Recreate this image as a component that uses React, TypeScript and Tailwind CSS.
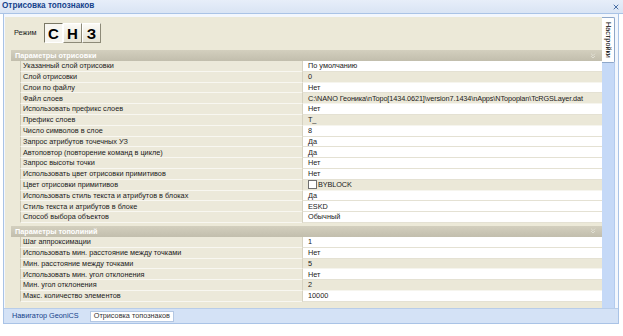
import React from 'react';
import { ChevronsDown, X } from 'lucide-react';

type PropRow = {
  label: string;
  value: string;
  readOnly?: boolean;
  swatch?: boolean;
};

const drawRows: PropRow[] = [
  { label: 'Указанный слой отрисовки', value: 'По умолчанию' },
  { label: 'Слой отрисовки', value: '0', readOnly: true },
  { label: 'Слои по файлу', value: 'Нет' },
  { label: 'Файл слоев', value: 'C:\\NANO Геоника\\nTopo[1434.0621]\\version7.1434\\nApps\\NTopoplan\\TcRGSLayer.dat', readOnly: true },
  { label: 'Использовать префикс слоев', value: 'Нет' },
  { label: 'Префикс слоев', value: 'T_', readOnly: true },
  { label: 'Число символов в слое', value: '8' },
  { label: 'Запрос атрибутов точечных УЗ', value: 'Да' },
  { label: 'Автоповтор (повторение команд в цикле)', value: 'Да' },
  { label: 'Запрос высоты точки', value: 'Нет' },
  { label: 'Использовать цвет отрисовки примитивов', value: 'Нет' },
  { label: 'Цвет отрисовки примитивов', value: 'BYBLOCK', readOnly: true, swatch: true },
  { label: 'Использовать стиль текста и атрибутов в блоках', value: 'Да' },
  { label: 'Стиль текста и атрибутов в блоке', value: 'ESKD' },
  { label: 'Способ выбора объектов', value: 'Обычный' },
];

const lineRows: PropRow[] = [
  { label: 'Шаг аппроксимации', value: '1' },
  { label: 'Использовать мин. расстояние между точками', value: 'Нет' },
  { label: 'Мин. расстояние между точками', value: '5', readOnly: true },
  { label: 'Использовать мин. угол отклонения', value: 'Нет' },
  { label: 'Мин. угол отклонения', value: '2', readOnly: true },
  { label: 'Макс. количество элементов', value: '10000' },
];

const SectionHeader = ({ title }: { title: string }) => (
  <div className="ml-[6px] h-[11px] flex items-center justify-between pl-[4px] pr-[5px] bg-gradient-to-b from-[#d3cfbe] to-[#c2bead] text-white font-bold">
    <span className="leading-none">{title}</span>
    <ChevronsDown className="w-[8px] h-[8px] text-[#ecebe3]" strokeWidth={2} />
  </div>
);

const Row = ({ row }: { row: PropRow }) => (
  <div className="ml-[6px] flex h-[10.8px]">
    <div className="w-[9px] shrink-0" />
    <div className="w-[282px] shrink-0 flex items-center pl-[2px] bg-[#ece9da] border-l border-[#cdc9b6] border-b border-b-[#f8f7f1] text-[#1a1a1a] leading-none whitespace-nowrap overflow-hidden">
      {row.label}
    </div>
    <div
      className={
        row.readOnly
          ? 'flex-1 flex items-center pl-[5px] bg-[#ebe8d8] border-l border-[#d6d2c1] border-b border-b-[#f6f5ee] text-[#1a1a1a] leading-none whitespace-nowrap overflow-hidden tracking-[-0.1px]'
          : 'flex-1 flex items-center pl-[5px] bg-white border-l border-[#d6d2c1] border-b border-b-[#e4e1d3] text-[#1a1a1a] leading-none whitespace-nowrap overflow-hidden'
      }
    >
      {row.swatch && (
        <span className="w-[9px] h-[9px] mr-[1px] bg-white border border-[#6f6f6f] shrink-0" />
      )}
      {row.value}
    </div>
  </div>
);

const ModeButton = ({ letter, active }: { letter: string; active?: boolean }) => (
  <div
    className={
      active
        ? 'w-[19px] h-[20px] flex items-center justify-center bg-[#f7f6f1] border border-t-[#7a7866] border-l-[#7a7866] border-r-[#ffffff] border-b-[#ffffff] font-bold text-[15px] leading-none text-black'
        : 'w-[19px] h-[20px] flex items-center justify-center bg-gradient-to-b from-[#fbfaf6] to-[#e6e3d4] border border-t-[#ffffff] border-l-[#ffffff] border-r-[#8d8a78] border-b-[#8d8a78] font-bold text-[15px] leading-none text-black'
    }
  >
    {letter}
  </div>
);

export default function App() {
  return (
    <div className="w-[623px] h-[336px] bg-white overflow-hidden font-['Liberation_Sans',Arial,sans-serif] text-[7.3px]">
      {/* title bar */}
      <div className="h-[14px] flex items-center justify-between pl-[2px] pr-[3px] bg-gradient-to-b from-[#e7eef9] to-[#d9e4f4] border-b border-[#a9c3e6]">
        <span className="font-bold text-[8.2px] text-[#15428b] leading-none">Отрисовка топознаков</span>
        <X className="w-[8px] h-[8px] text-[#4a6fa5]" strokeWidth={3} />
      </div>

      <div className="ml-[3px] w-[616px] border-l border-r border-b border-[#a9c3e6] bg-[#f3f7fd]">
        <div className="flex pt-[3px] pl-[1px]">
          {/* main panel */}
          <div className="w-[597px] h-[291px] bg-[#ece9d8] flex flex-col">
            <div className="flex items-center pl-[9px] pt-[6px] h-[26px]">
              <span className="w-[30px] text-[#1a1a1a]">Режим</span>
              <div className="flex">
                <ModeButton letter="С" active />
                <ModeButton letter="Н" />
                <ModeButton letter="З" />
              </div>
            </div>
            <div className="h-[7px]" />
            <SectionHeader title="Параметры отрисовки" />
            {drawRows.map((r) => (
              <Row key={r.label} row={r} />
            ))}
            <div className="h-[3px]" />
            <SectionHeader title="Параметры тополиний" />
            {lineRows.map((r) => (
              <Row key={r.label} row={r} />
            ))}
          </div>

          {/* right side strip with vertical tab */}
          <div className="w-[13px] h-[291px] flex flex-col bg-[#c5d9f7]">
            <div className="h-[46px] bg-white border border-l-0 border-[#8ea7c9] rounded-r-[2px] flex items-center justify-center overflow-visible">
              <span className="[writing-mode:vertical-rl] leading-none text-black whitespace-nowrap">Настройки</span>
            </div>
            <div className="flex-1 border-r border-[#b3cbee]" />
          </div>
          <div className="w-[3px]" />
        </div>

        {/* bottom tabs */}
        <div className="h-[15px] flex items-center bg-[#d4e2f6] border-t border-[#b8cde9] pl-[8px] gap-[11px]">
          <span className="text-[#15428b] leading-none">Навигатор GeoniCS</span>
          <span className="h-[11px] px-[3px] flex items-center bg-white border border-[#b3c7e3] text-[#333] leading-none">
            Отрисовка топознаков
          </span>
        </div>
      </div>
    </div>
  );
}
